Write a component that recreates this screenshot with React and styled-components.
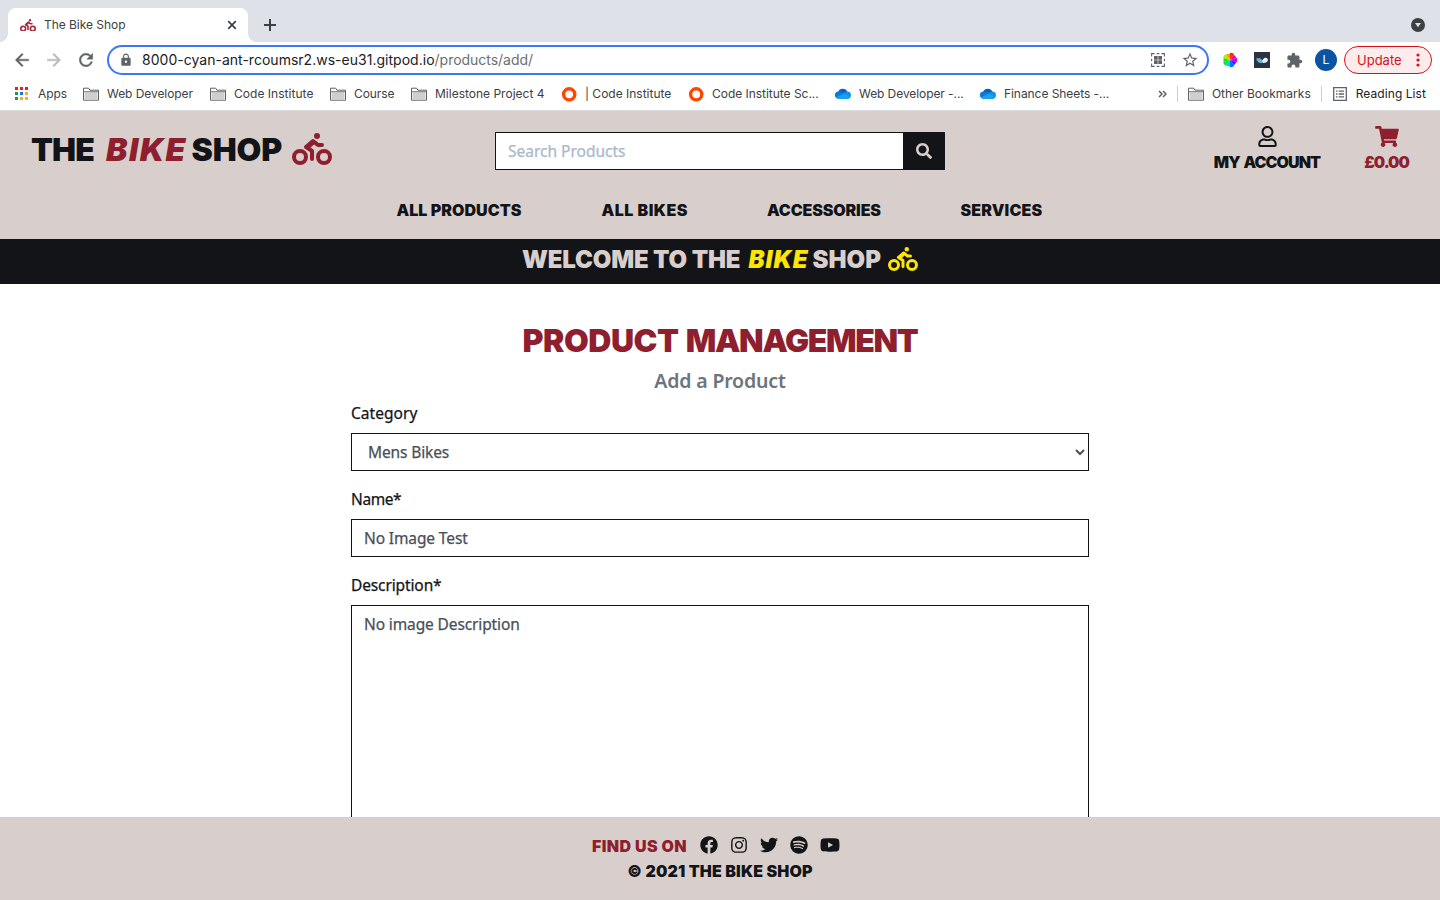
import React from "react";
import styled, { createGlobalStyle, css } from "styled-components";
import {
  FaBiking,
  FaRegUser,
  FaShoppingCart,
  FaSearch,
  FaFacebook,
  FaInstagram,
  FaTwitter,
  FaSpotify,
  FaYoutube,
} from "react-icons/fa";
import { MdArrowBack, MdArrowForward, MdRefresh, MdLock, MdStarBorder, MdExtension } from "react-icons/md";

const dark = "#131417";
const red = "#8f1f2e";
const stone = "#d8cfcd";
const yellow = "#ffe600";

const GlobalStyle = createGlobalStyle`
  *, *::before, *::after { box-sizing: border-box; }
  body { margin: 0; background: #fff; overflow: hidden; }
  input, select, textarea, button { font: inherit; margin: 0; border-radius: 0; outline: none; }
  svg { display: block; flex: none; }
`;

const Screen = styled.div`
  display: flex;
  flex-direction: column;
  width: 1440px;
  height: 900px;
  overflow: hidden;
  font-family: "Noto Sans", sans-serif;
`;

/* ---------- browser window ---------- */

const Browser = styled.div`
  flex: none;
  font-family: Inter, sans-serif;
  font-size: 12px;
  color: #3c4043;
`;

const TabStrip = styled.div`
  display: flex;
  align-items: flex-end;
  height: 42px;
  padding: 0 15px 0 8px;
  background: #dee1e8;
`;

const Tab = styled.div`
  position: relative;
  display: flex;
  align-items: center;
  width: 240px;
  height: 34px;
  padding: 0 11px 0 12px;
  background: #fff;
  border-radius: 8px 8px 0 0;
  svg:first-child { margin-right: 8px; }
  &::before,
  &::after {
    content: "";
    position: absolute;
    bottom: 0;
    width: 8px;
    height: 8px;
  }
  &::before { left: -8px; background: radial-gradient(circle at 0 0, transparent 7.5px, #fff 8px); }
  &::after { right: -8px; background: radial-gradient(circle at 100% 0, transparent 7.5px, #fff 8px); }
`;

const TabTitle = styled.span`
  flex: 1;
  padding-bottom: 1px;
  letter-spacing: -0.04px;
  white-space: nowrap;
`;

const NewTab = styled.div`
  flex: 1;
  align-self: center;
  padding: 8px 0 0 15px;
`;

const TabSearch = styled.div`
  align-self: center;
  padding-top: 8px;
`;

const Toolbar = styled.div`
  display: flex;
  align-items: center;
  height: 36px;
  padding: 0 8px 0 12px;
  color: #5f6368;
`;

const NavButtons = styled.div`
  display: flex;
  gap: 12px;
  width: 95px;
  path:not([fill="none"]) { stroke: currentColor; stroke-width: 0.5px; }
`;

const AddressBar = styled.div`
  display: flex;
  align-items: center;
  width: 1102px;
  height: 30px;
  padding: 0 8px 0 10px;
  border: 2px solid #3b78f5;
  border-radius: 15px;
  background: #fff;
`;

const Url = styled.div`
  flex: 1;
  padding-left: 9px;
  font-size: 14px;
  line-height: 20px;
  letter-spacing: 0.02px;
  color: #202124;
  white-space: nowrap;
  span { color: #6b6e72; letter-spacing: -0.03px; }
`;

const AddressIcons = styled.div`
  display: flex;
  align-items: center;
  gap: 16px;
`;

const Extensions = styled.div`
  display: flex;
  align-items: center;
  gap: 16px;
  padding-left: 13px;
`;

const Avatar = styled.div`
  width: 22px;
  height: 22px;
  margin: 0 7px 0 12px;
  border-radius: 50%;
  background: #0b54a3;
  color: #fff;
  line-height: 22px;
  text-align: center;
`;

const UpdateButton = styled.div`
  display: flex;
  align-items: center;
  justify-content: space-between;
  width: 88px;
  height: 28px;
  padding: 0 11px 0 12px;
  border: 1px solid #d8121b;
  border-radius: 14px;
  background: #fdecec;
  color: #d8121b;
  font-size: 13px;
`;

const Bookmarks = styled.div`
  display: grid;
  grid-template-columns: 68px 127px 120px 81px 150px 127px 147px 145px 140px 1fr;
  align-items: center;
  height: 33px;
  padding: 0 14px 1px 15px;
  border-bottom: 1px solid #d9dbdd;
  white-space: nowrap;
`;

const Bookmark = styled.div`
  display: flex;
  align-items: center;
  gap: ${(p) => p.$gap || 8}px;
  letter-spacing: ${(p) => p.$ls || 0}px;
  color: ${(p) => p.$color || "inherit"};
`;

const BookmarksEnd = styled.div`
  display: flex;
  align-items: center;
  justify-content: flex-end;
`;

const Divider = styled.i`
  width: 1px;
  height: 16px;
  margin: 0 ${(p) => p.$right}px 0 ${(p) => p.$left}px;
  background: #cdcfd3;
`;

/* ---------- shop ---------- */

const display = css`
  font-family: Inter, sans-serif;
  font-weight: 900;
  white-space: nowrap;
`;

const Header = styled.header`
  flex: none;
  height: 128px;
  background: ${stone};
  color: ${dark};
`;

const HeaderTop = styled.div`
  display: grid;
  grid-template-columns: 464px 450px 1fr;
  align-items: start;
  height: 87px;
  padding: 15px 31px 0;
`;

const Wordmark = styled.div`
  ${display}
  display: flex;
  font-size: ${(p) => p.$size}px;
  line-height: ${(p) => p.$size}px;
`;

const Word = styled.span`
  width: ${(p) => p.$width}px;
  letter-spacing: ${(p) => p.$ls || 0}px;
  padding-top: 1px;
`;

const BikeWord = styled(Word)`
  font-style: italic;
  color: ${(p) => p.$color};
`;

const Cyclist = styled(FaBiking)`
  width: ${(p) => p.$width}px;
  height: ${(p) => p.$width * 0.8}px;
`;

const Brand = styled.a`
  padding-top: 7px;
`;

const SearchForm = styled.form`
  display: flex;
  height: 38px;
  margin: 6px 0 0;
`;

const SearchInput = styled.input`
  flex: 1;
  min-width: 0;
  padding: 0 12px;
  border: 1px solid ${dark};
  border-right: 0;
  background: #fff;
  font-size: 15.5px;
  &::placeholder {
    color: #a9b9cb;
    opacity: 1;
    -webkit-text-stroke: 0.25px #a9b9cb;
  }
`;

const SearchButton = styled.button`
  display: flex;
  align-items: center;
  justify-content: center;
  width: 42px;
  padding: 0;
  border: 0;
  background: ${dark};
  color: ${stone};
`;

const AccountLinks = styled.div`
  display: flex;
  justify-content: flex-end;
  gap: 44px;
`;

const AccountLink = styled.a`
  ${display}
  display: flex;
  flex-direction: column;
  align-items: center;
  width: ${(p) => p.$width}px;
  color: ${(p) => p.$color};
  font-size: 16px;
  line-height: 24px;
  letter-spacing: ${(p) => p.$ls}px;
  word-spacing: 1.5px;
  svg { margin-bottom: 3px; }
`;

const CartIcon = styled(FaShoppingCart)`
  width: 24px;
  height: 21px;
`;

const MainNav = styled.nav`
  display: flex;
  gap: 80px;
  padding-left: 396.5px;
`;

const NavLink = styled.a`
  ${display}
  width: ${(p) => p.$width}px;
  font-size: 16px;
  line-height: 24px;
  letter-spacing: ${(p) => p.$ls}px;
`;

const Banner = styled.div`
  flex: none;
  display: flex;
  justify-content: center;
  height: 45px;
  padding-top: 8px;
  background: ${dark};
  color: ${stone};
`;

const Main = styled.main`
  flex: 1;
  min-height: 0;
  overflow: hidden;
  display: flex;
  flex-direction: column;
  align-items: center;
  padding-top: 38px;
`;

const Title = styled.h1`
  ${display}
  margin: 0 0 9px;
  color: ${red};
  font-size: 32px;
  line-height: 38px;
  letter-spacing: -1.35px;
`;

const TitleLead = styled.span`
  letter-spacing: -0.5px;
  word-spacing: 1.5px;
`;

const Subtitle = styled.h2`
  margin: 0 0 8px;
  color: #6c757d;
  font-size: 19.5px;
  font-weight: 600;
  line-height: 24px;
  letter-spacing: -0.17px;
`;

const Form = styled.form`
  width: 738px;
  -webkit-text-stroke: 0.25px currentColor;
`;

const Field = styled.div`
  margin-bottom: 16px;
`;

const Label = styled.label`
  display: block;
  margin-bottom: 8px;
  color: ${dark};
  font-size: 15.5px;
  line-height: 24px;
  letter-spacing: ${(p) => p.$ls}px;
`;

const control = css`
  display: block;
  width: 100%;
  border: 1px solid ${dark};
  background: #fff;
  color: #495057;
  font-size: 15.5px;
  line-height: 24px;
  letter-spacing: -0.12px;
`;

const TextInput = styled.input`
  ${control}
  height: 38px;
  padding: 6px 12px;
`;

const SelectBox = styled.div`
  ${control}
  display: flex;
  align-items: center;
  justify-content: space-between;
  height: 38px;
  padding: 0 3px 0 16px;
`;

const TextArea = styled.textarea`
  ${control}
  height: 262px;
  padding: 6px 12px;
  resize: none;
`;

const Footer = styled.footer`
  flex: none;
  display: flex;
  flex-direction: column;
  align-items: center;
  height: 83px;
  padding-top: 17px;
  background: ${stone};
  color: ${dark};
`;

const Social = styled.div`
  display: flex;
  align-items: center;
  height: 24px;
  margin: 0 8px 1px 0;
`;

const SocialIcons = styled.div`
  display: flex;
  align-items: center;
  gap: 12px;
  padding: 0 0 2px 13px;
`;

const FooterText = styled.span`
  ${display}
  font-size: 16px;
  line-height: 24px;
  color: ${(p) => p.$color};
  letter-spacing: ${(p) => p.$ls}px;
`;

/* ---------- drawings ---------- */

const Folder = () => (
  <svg width="16" height="14" viewBox="0 0 16 14">
    <path d="M.5 1.2h5.2l1.3 2h8.5v10H.5z" fill="#fff" stroke="#5f6062" />
    <path d="M1.5 5.2h13v7.2h-13z" fill="#cfcfcf" />
    <path d="M.5 4.7h15" stroke="#77787a" />
  </svg>
);

const appColors = ["#f21b1b", "#f21b1b", "#f21b1b", "#0f9d58", "#1a73e8", "#fbae17", "#0f9d58", "#fbae17", "#fbae17"];
const AppsGrid = () => (
  <svg width="13" height="13" viewBox="0 0 13 13">
    {appColors.map((c, i) => (
      <rect key={i} x={(i % 3) * 5} y={Math.floor(i / 3) * 5} width="3" height="3" fill={c} />
    ))}
  </svg>
);

const Ring = () => (
  <svg width="16" height="16" viewBox="0 0 16 16">
    <circle cx="8.2" cy="8.3" r="5.6" fill="none" stroke="#ff4500" strokeWidth="3.4" />
  </svg>
);

const Cloud = () => (
  <svg width="16" height="11" viewBox="0 0 16 11">
    <path d="M3.2 3.9A5 5 0 0 1 12.4 3.7L8.5 8z" fill="#0a5fc4" />
    <path d="M3.6 3.6c2.4-.4 5 1.6 7.6 3.4L3.4 10.8A3.5 3.5 0 0 1 3.6 3.6z" fill="#0f78d4" />
    <path d="M12.2 3.6a3.6 3.6 0 0 1 .3 7.2H10L8 6c1.2-1.3 2.4-2.4 4.2-2.4z" fill="#1490df" />
    <path d="M1 9.3 9.3 5.5l6 3.8a3.3 3.3 0 0 1-2.8 1.7H3.5A3.2 3.2 0 0 1 1 9.3z" fill="#1ba1f0" />
  </svg>
);

const wheel = ["#ff2a00", "#f0008a", "#c800ff", "#3a1cff", "#0070ff", "#00d0d8", "#00e070", "#20e000", "#a8f000", "#ff9a00"];
const ColorWheel = () => (
  <svg width="16" height="16" viewBox="-8 -8 16 16">
    {wheel.map((c, i) => {
      const a = (i * Math.PI) / 5 - Math.PI / 2;
      const b = a + Math.PI / 5;
      const r = i % 2 ? 6.6 : 7.3;
      return (
        <path
          key={c}
          fill={c}
          d={`M0 0L${r * Math.cos(a)} ${r * Math.sin(a)}A${r} ${r} 0 0 1 ${r * Math.cos(b)} ${r * Math.sin(b)}z`}
        />
      );
    })}
  </svg>
);

const DarkExtension = () => (
  <svg width="16" height="16" viewBox="0 0 16 16">
    <rect width="16" height="16" fill="#2b3241" />
    <path d="M2.3 6.3h4l2 2 1 2.2-2 .8C4.5 11 2.5 9 2.3 6.3z" fill="#6cb5cb" />
    <path d="M8 8.4l2.3-2.3c2-1 4 .3 3.6 2.2-.3 1.8-2.6 3-4.8 2.7z" fill="#e8eef2" />
  </svg>
);

const QrIcon = () => (
  <svg width="14" height="14" viewBox="0 0 14 14" fill="none" stroke="#5f6368" strokeWidth="1.1">
    <path d="M.6 3.5V.6h3M10.4.6h3v2.9M13.4 10.5v2.9h-3M3.6 13.4h-3v-2.9M5.7.6h2.6M5.7 13.4h2.6M.6 5.7v2.6M13.4 5.7v2.6" />
    <path d="M3 3h3.700v3.700H3zM7.300 3h3.700v3.700H7.300zM3 7.300h3.700v3.700H3zM7.300 7.300h3.700v3.700H7.300z" fill="#5f6368" stroke="none" />
  </svg>
);

const ReadingListIcon = () => (
  <svg width="14" height="14" viewBox="0 0 14 14" fill="none" stroke="#5f6368" strokeWidth="1.3">
    <path d="M.7.7h12.6v12.6H.7z" />
    <path d="M3 4.2h1.5M3 7h1.5M3 9.8h1.5M5.7 4.2H11M5.7 7H11M5.7 9.8H11" />
  </svg>
);

const bookmarks = [
  [Folder, "Web Developer", -0.07],
  [Folder, "Code Institute", 0.03],
  [Folder, "Course", -0.1],
  [Folder, "Milestone Project 4", 0],
  [Ring, "| Code Institute", 0],
  [Ring, "Code Institute Sc...", -0.03],
  [Cloud, "Web Developer -...", -0.08],
  [Cloud, "Finance Sheets -...", -0.06],
];

export default function App() {
  return (
    <Screen>
      <GlobalStyle />
      <Browser>
        <TabStrip>
          <Tab>
            <Cyclist $width={16} color="#a3283c" />
            <TabTitle>The Bike Shop</TabTitle>
            <svg width="10" height="10" viewBox="0 0 10 10" stroke="#3c4043" strokeWidth="1.7">
              <path d="M1.2 1.2l7.6 7.6M8.8 1.2L1.2 8.8" />
            </svg>
          </Tab>
          <NewTab>
            <svg width="14" height="14" viewBox="0 0 14 14" stroke="#3c4043" strokeWidth="2">
              <path d="M7 1v12M1 7h12" />
            </svg>
          </NewTab>
          <TabSearch>
            <svg width="14" height="14" viewBox="0 0 14 14">
              <circle cx="7" cy="7" r="7" fill="#3c4043" />
              <path d="M4 5h6L7 9.2z" fill="#dee1e8" />
            </svg>
          </TabSearch>
        </TabStrip>
        <Toolbar>
          <NavButtons>
            <MdArrowBack size={20} />
            <MdArrowForward size={20} color="#b9bbbe" />
            <MdRefresh size={20} />
          </NavButtons>
          <AddressBar>
            <MdLock size={14} />
            <Url>
              8000-cyan-ant-rcoumsr2.ws-eu31.gitpod.io<span>/products/add/</span>
            </Url>
            <AddressIcons>
              <QrIcon />
              <MdStarBorder size={18} />
            </AddressIcons>
          </AddressBar>
          <Extensions>
            <ColorWheel />
            <DarkExtension />
            <MdExtension size={17} />
          </Extensions>
          <Avatar>L</Avatar>
          <UpdateButton>
            Update
            <svg width="4" height="14" viewBox="0 0 4 14" fill="#d8121b">
              <circle cx="2" cy="2" r="1.6" />
              <circle cx="2" cy="7" r="1.6" />
              <circle cx="2" cy="12" r="1.6" />
            </svg>
          </UpdateButton>
        </Toolbar>
        <Bookmarks>
          <Bookmark $gap={10} $ls={-0.1}>
            <AppsGrid />
            Apps
          </Bookmark>
          {bookmarks.map(([Icon, text, ls]) => (
            <Bookmark key={text} $ls={ls}>
              <Icon />
              {text}
            </Bookmark>
          ))}
          <BookmarksEnd>
            <svg width="9" height="8" viewBox="0 0 9 8" fill="none" stroke="#5f6368" strokeWidth="1.5">
              <path d="M1 1l3 3-3 3M5 1l3 3-3 3" />
            </svg>
            <Divider $left={10} $right={10} />
            <Bookmark>
              <Folder />
              Other Bookmarks
            </Bookmark>
            <Divider $left={10} $right={11} />
            <Bookmark $gap={9} $ls={0.07} $color="#202124">
              <ReadingListIcon />
              Reading List
            </Bookmark>
          </BookmarksEnd>
        </Bookmarks>
      </Browser>

      <Header>
        <HeaderTop>
          <Brand>
            <Wordmark $size={32}>
              <Word $width={75} $ls={-0.9}>THE</Word>
              <BikeWord $width={85.5} $ls={1.5} $color={red}>BIKE</BikeWord>
              <Word $width={100.5} $ls={-0.1}>SHOP</Word>
              <Cyclist $width={40} color={red} />
            </Wordmark>
          </Brand>
          <SearchForm>
            <SearchInput placeholder="Search Products" />
            <SearchButton type="button">
              <FaSearch size={16} />
            </SearchButton>
          </SearchForm>
          <AccountLinks>
            <AccountLink $width={106} $color={dark} $ls={-0.92}>
              <FaRegUser size={21} />
              MY ACCOUNT
            </AccountLink>
            <AccountLink $width={45} $color={red} $ls={-1}>
              <CartIcon />
              £0.00
            </AccountLink>
          </AccountLinks>
        </HeaderTop>
        <MainNav>
          <NavLink $width={125} $ls={0.05}>ALL PRODUCTS</NavLink>
          <NavLink $width={85.5} $ls={0.5}>ALL BIKES</NavLink>
          <NavLink $width={113.5} $ls={-0.12}>ACCESSORIES</NavLink>
          <NavLink $width={82} $ls={0.15}>SERVICES</NavLink>
        </MainNav>
      </Header>

      <Banner>
        <Wordmark $size={24}>
          <Word $width={226.5} $ls={-0.18}>WELCOME TO THE</Word>
          <BikeWord $width={64} $ls={1} $color={yellow}>BIKE</BikeWord>
          <Word $width={75.5} $ls={0.05}>SHOP</Word>
          <Cyclist $width={30} color={yellow} />
        </Wordmark>
      </Banner>

      <Main>
        <Title>
          <TitleLead>PRODUCT </TitleLead>
          MANAGEMENT
        </Title>
        <Subtitle>Add a Product</Subtitle>
        <Form>
          <Field>
            <Label $ls={0.05}>Category</Label>
            <SelectBox>
              Mens Bikes
              <svg width="10" height="8" viewBox="0 0 10 8" fill="none" stroke="#495057" strokeWidth="2">
                <path d="M1 2l4 4 4-4" />
              </svg>
            </SelectBox>
          </Field>
          <Field>
            <Label $ls={-0.4}>Name*</Label>
            <TextInput defaultValue="No Image Test" />
          </Field>
          <Field>
            <Label $ls={-0.12}>Description*</Label>
            <TextArea defaultValue="No image Description" />
          </Field>
        </Form>
      </Main>

      <Footer>
        <Social>
          <FooterText $color={red} $ls={0.4}>FIND US ON</FooterText>
          <SocialIcons>
            <FaFacebook size={18} />
            <FaInstagram size={18} />
            <FaTwitter size={18} />
            <FaSpotify size={18} />
            <FaYoutube size={20} />
          </SocialIcons>
        </Social>
        <FooterText $color={dark} $ls={0.15}>© 2021 THE BIKE SHOP</FooterText>
      </Footer>
    </Screen>
  );
}
